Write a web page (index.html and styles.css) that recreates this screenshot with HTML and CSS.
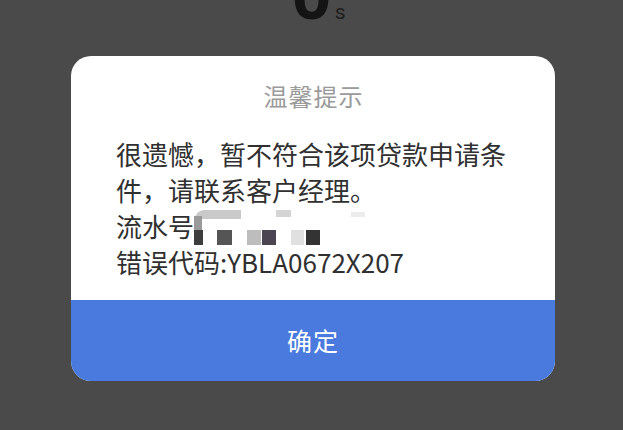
FILE: index.html
```html
<!DOCTYPE html>
<html lang="zh-CN">
<head>
<meta charset="utf-8">
<title>温馨提示</title>
<link rel="stylesheet" href="styles.css">
</head>
<body>
<div class="screen">
  <div class="timer">
    <div class="timer-inner"><span class="num">0</span><span class="unit">s</span></div>
  </div>
  <div class="dialog">
    <div class="dialog-body">
      <div class="title">温馨提示</div>
      <div class="content">
        <p class="msg">很遗憾，暂不符合该项贷款申请条件，请联系客户经理。</p>
        <p class="line">流水号<span class="mosaic"><span class="m m1"></span><span class="m m2"></span><span class="m m3"></span><span class="m m4"></span><span class="m m5"></span><span class="m m6"></span><span class="m m7"></span><span class="m m8"></span><span class="m m9"></span><span class="m m10"></span></span></p>
        <p class="line">错误代码:YBLA0672X207</p>
      </div>
    </div>
    <button class="ok" type="button">确定</button>
  </div>
</div>
</body>
</html>
```

FILE: styles.css
```css
* { box-sizing: border-box; }
html, body {
  margin: 0;
  padding: 0;
  width: 623px;
  height: 430px;
  overflow: hidden;
  background: #4a4a4a;
  font-family: "Noto Sans CJK SC", "Noto Sans", sans-serif;
}
.screen {
  width: 623px;
  height: 430px;
  display: flex;
  flex-direction: column;
}
.timer {
  height: 56px;
  display: flex;
  justify-content: center;
  align-items: flex-start;
  padding-left: 14px;
}
.timer-inner {
  display: flex;
  align-items: baseline;
  margin-top: -40px;
  font-family: Roboto, "Noto Sans", sans-serif;
  line-height: 70px;
}
.num {
  font-size: 70px;
  font-weight: 700;
  color: #141414;
}
.unit {
  font-size: 21px;
  color: #1e1e1e;
  margin-left: 3px;
}
.dialog {
  margin-left: 71px;
  width: 484px;
  height: 325px;
  background: #ffffff;
  border-radius: 20px;
  overflow: hidden;
  display: flex;
  flex-direction: column;
}
.dialog-body {
  flex: 1;
  padding: 24px 44px 0 45px;
}
.title {
  text-align: center;
  font-size: 24px;
  line-height: 32px;
  color: #9a9a9a;
  letter-spacing: 1px;
  margin-bottom: 24px;
}
.content {
  font-size: 26px;
  line-height: 36px;
  color: #303030;
}
.content p {
  margin: 0;
}
.mosaic {
  display: inline-block;
  position: relative;
  width: 175px;
  height: 36px;
  vertical-align: top;
}
.m {
  position: absolute;
  display: block;
}
.m1 { left: 0; top: 22px; width: 9px; height: 15px; background: #3d3d3d; }
.m2 { left: 23px; top: 22px; width: 15px; height: 15px; background: #555555; }
.m3 { left: 53px; top: 22px; width: 14px; height: 15px; background: #bdbdbd; }
.m4 { left: 68px; top: 22px; width: 14px; height: 15px; background: #4a4550; }
.m5 { left: 97px; top: 22px; width: 13px; height: 15px; background: #e0e0e0; }
.m6 { left: 112px; top: 22px; width: 14px; height: 15px; background: #333333; }
.m7 { left: 1px; top: 2px; width: 46px; height: 9px; background: #c9c9c9; border-top-left-radius: 12px; }
.m8 { left: 0; top: 8px; width: 8px; height: 14px; background: #9a9a9a; }
.m9 { left: 82px; top: 2px; width: 15px; height: 7px; background: #d4d4d4; }
.m10 { left: 157px; top: 4px; width: 14px; height: 5px; background: #ececec; }
.ok {
  height: 81px;
  width: 100%;
  border: 0;
  margin: 0;
  padding: 0;
  background: #4a7ade;
  color: #ffffff;
  font-family: "Noto Sans CJK SC", "Noto Sans", sans-serif;
  font-size: 25px;
  line-height: 81px;
  letter-spacing: 1px;
}
```
